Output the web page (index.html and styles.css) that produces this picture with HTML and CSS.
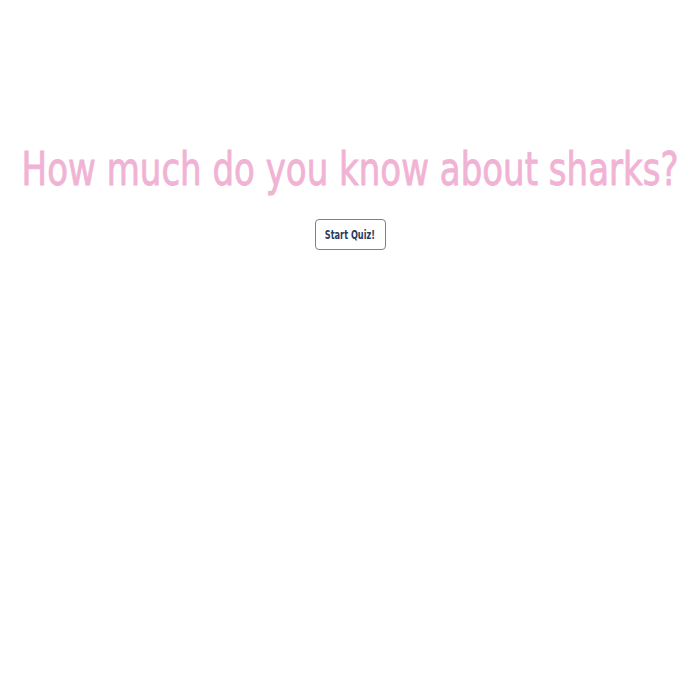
FILE: index.html
```html
<!DOCTYPE html>
<html>
<head>
<meta charset="utf-8">
<link rel="stylesheet" href="styles.css">
</head>
<body>
<main class="intro">
  <h1 class="title">How much do you know about sharks?</h1>
  <button class="start-btn"><span class="start-label">Start Quiz!</span></button>
</main>
</body>
</html>
```
FILE: styles.css
```css
html, body {
  margin: 0;
  padding: 0;
  background: #ffffff;
}
.intro {
  display: flex;
  flex-direction: column;
  align-items: center;
  padding-top: 135px;
  font-family: "DejaVu Sans Condensed", "DejaVu Sans", sans-serif;
  font-stretch: condensed;
}
.title {
  margin: 0;
  font-size: 47px;
  line-height: 68px;
  font-weight: normal;
  color: #f1b3d4;
  -webkit-text-stroke: 0.9px #f1b3d4;
  white-space: nowrap;
  transform: scaleX(0.805);
}
.start-btn {
  margin-top: 16px;
  font-family: inherit;
  font-stretch: condensed;
  font-size: 13px;
  font-weight: bold;
  color: #2b3a5e;
  background: #ffffff;
  border: 1px solid #76819f;
  border-radius: 4px;
  padding: 0;
  height: 31px;
  width: 71px;
  white-space: nowrap;
  display: flex;
  align-items: center;
  justify-content: center;
}
.start-label {
  display: inline-block;
  transform: scaleX(0.7);
}
```
